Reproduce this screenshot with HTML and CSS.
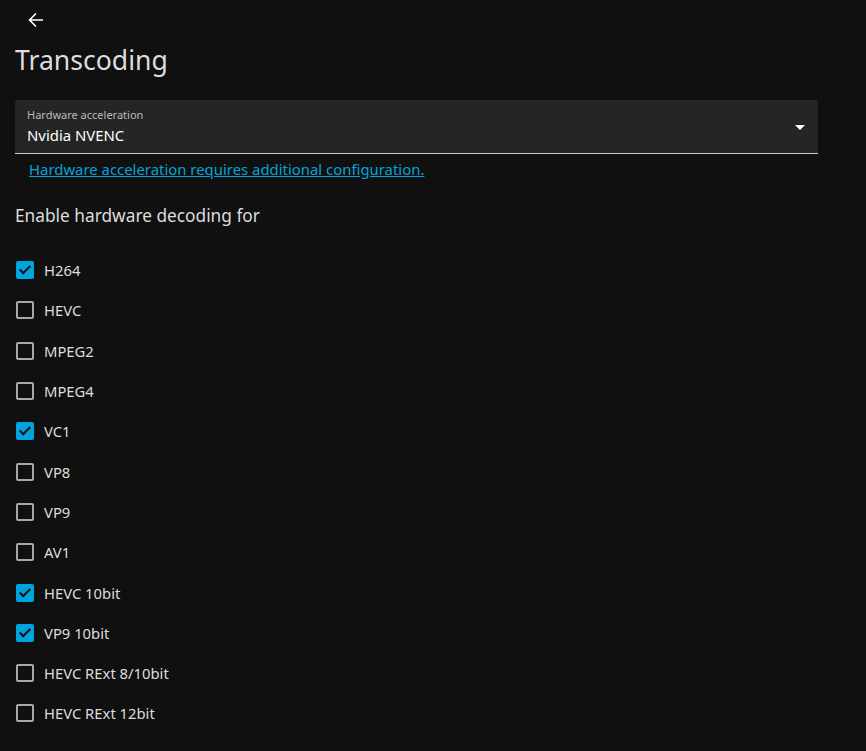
FILE: index.html
```html
<!DOCTYPE html>
<html>
<head>
<meta charset="utf-8">
<link rel="stylesheet" href="styles.css">
</head>
<body>
<div class="page">
  <div class="topbar">
    <button class="back" aria-label="Back">
      <svg width="24" height="24" viewBox="0 0 24 24"><path d="M19 12H6M12 5.5 5.5 12 12 18.5" fill="none" stroke="#fff" stroke-width="1.6"/></svg>
    </button>
  </div>
  <h1 class="title">Transcoding</h1>
  <div class="select">
    <div class="select-label">Hardware acceleration</div>
    <div class="select-value">Nvidia NVENC</div>
    <span class="caret"></span>
  </div>
  <a class="help-link" href="#">Hardware acceleration requires additional configuration.</a>
  <h3 class="section">Enable hardware decoding for</h3>
  <div class="checks">
    <label class="check"><span class="box on"></span>H264</label>
    <label class="check"><span class="box"></span>HEVC</label>
    <label class="check"><span class="box"></span>MPEG2</label>
    <label class="check"><span class="box"></span>MPEG4</label>
    <label class="check"><span class="box on"></span>VC1</label>
    <label class="check"><span class="box"></span>VP8</label>
    <label class="check"><span class="box"></span>VP9</label>
    <label class="check"><span class="box"></span>AV1</label>
    <label class="check"><span class="box on"></span>HEVC 10bit</label>
    <label class="check"><span class="box on"></span>VP9 10bit</label>
    <label class="check"><span class="box"></span>HEVC RExt 8/10bit</label>
    <label class="check"><span class="box"></span>HEVC RExt 12bit</label>
  </div>
</div>
</body>
</html>
```

FILE: styles.css
```css
html, body {
  margin: 0;
  padding: 0;
  background: #101010;
  color: #ddd;
  font-family: "Noto Sans", "Open Sans", sans-serif;
  height: 100%;
  overflow: hidden;
}
.page {
  padding: 0 48px 0 15px;
}
.topbar {
  height: 40px;
  display: flex;
  align-items: center;
}
.back {
  background: none;
  border: 0;
  padding: 0;
  margin: 0 0 0 9px;
  width: 24px;
  height: 24px;
  display: flex;
}
.title {
  margin: 0;
  font-size: 26.6px;
  font-weight: 400;
  line-height: 40px;
  color: #ddd;
}
.select {
  position: relative;
  margin-top: 20px;
  background: #252525;
  border-radius: 3px 3px 0 0;
  border-bottom: 1px solid #ccc;
  height: 54px;
  box-sizing: border-box;
  padding: 6px 12px 0;
  width: 803px;
}
.select-label {
  font-size: 11px;
  color: #bbb;
  line-height: 18px;
}
.select-value {
  font-size: 14.9px;
  color: #fff;
  line-height: 22px;
}
.caret {
  position: absolute;
  right: 13px;
  top: 25px;
  width: 0;
  height: 0;
  border-left: 5px solid transparent;
  border-right: 5px solid transparent;
  border-top: 5px solid #fff;
}
.help-link {
  display: inline-block;
  margin: 5px 0 0 14px;
  font-size: 14.9px;
  line-height: 20px;
  color: #00a4dc;
  text-decoration: underline;
}
.section {
  margin: 23px 0 0;
  font-size: 17.3px;
  font-weight: 400;
  line-height: 26px;
  color: #ddd;
}
.checks {
  margin-top: 21px;
  display: flex;
  flex-direction: column;
}
.check {
  display: flex;
  align-items: center;
  height: 40.3px;
  font-size: 14.8px;
  color: #ddd;
}
.box {
  width: 18px;
  height: 18px;
  box-sizing: border-box;
  border: 2px solid #a8a8a8;
  border-radius: 2px;
  margin: 0 10px 0 1px;
  position: relative;
}
.box.on {
  background: #00a4dc;
  border-color: #00a4dc;
}
.box.on::after {
  content: "";
  position: absolute;
  left: 4px;
  top: 0px;
  width: 4px;
  height: 9px;
  border-right: 2px solid #111;
  border-bottom: 2px solid #111;
  transform: rotate(45deg);
}
```
